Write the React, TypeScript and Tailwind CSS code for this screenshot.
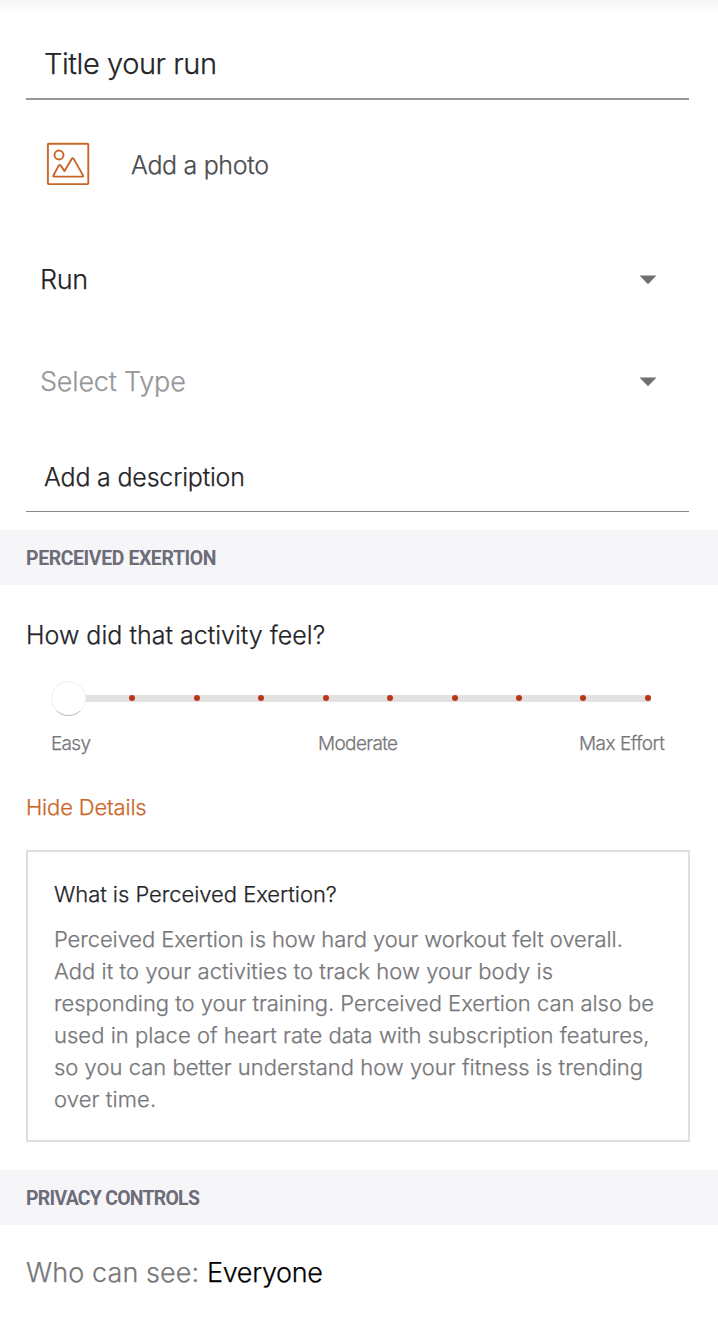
import React from "react";

const ticks = [1, 2, 3, 4, 5, 6, 7, 8, 9];

const explanation = [
  { text: "Perceived Exertion is how hard your workout felt overall.", style: "tracking-[-0.09px]" },
  { text: "Add it to your activities to track how your body is", style: "tracking-[0.05px]" },
  { text: "responding to your training. Perceived Exertion can also be", style: "tracking-[-0.04px]" },
  { text: "used in place of heart rate data with subscription features,", style: "tracking-[0.03px]" },
  { text: "so you can better understand how your fitness is trending", style: "tracking-[0.01px]" },
  { text: "over time.", style: "tracking-[0.12px]" },
];

function PhotoIcon() {
  return (
    <svg width="44" height="44" viewBox="0 0 44 44" fill="none" stroke="#cb6629" strokeWidth="1.9" strokeLinejoin="round">
      <rect x="1.9" y="1.7" width="40.4" height="40.4" rx="0.8" />
      <circle cx="13" cy="13" r="4.5" />
      <path d="M8 34.6 Q6.8 34.6 7.4 33.5 L12.7 23.6 Q13.7 22.1 14.8 23.6 L18.5 29.1 L25.7 16.9 Q26.7 15.4 27.7 16.9 L37 33.4 Q37.5 34.6 36.4 34.6 Z" />
    </svg>
  );
}

function Caret() {
  return (
    <svg width="18" height="10" viewBox="0 0 18 10" fill="#707070">
      <path d="M0.5 0.5H17.5L9 9.2Z" />
    </svg>
  );
}

function SectionHeader({ children }: { children: React.ReactNode }) {
  return (
    <h2 className="h-[55px] bg-[#f6f6f9] pl-[26px] pt-px font-['Roboto',sans-serif] text-[19.4px] leading-[56px] font-bold text-[#6d6d78] [-webkit-text-stroke:0px]">
      {children}
    </h2>
  );
}

export default function App() {
  return (
    <main className="flex h-[1318px] w-[718px] flex-col overflow-hidden whitespace-nowrap bg-white font-['Inter',sans-serif] font-light text-[#242428] [-webkit-text-stroke:0.25px]">
      <div className="h-3 shrink-0 bg-linear-to-b from-[#f5f5f5] to-white" />

      <div className="ml-[26px] mr-[29px] flex h-[88px] shrink-0 items-end border-b-2 border-[#98989a]">
        <div className="h-[68px] pl-[18px] text-[29px] leading-[68px] tracking-[-0.43px]">Title your run</div>
      </div>

      <div className="flex h-[130px] shrink-0 items-start pl-[46px] pt-[42px]">
        <PhotoIcon />
        <span className="ml-[41px] mt-[7px] text-[25px] leading-8 tracking-[-0.33px] text-[#4b4b4e]">Add a photo</span>
      </div>

      <div className="flex h-[99px] shrink-0 items-center justify-between pl-[40px] pr-[61px]">
        <span className="text-[27px] leading-8 tracking-[-0.4px]">Run</span>
        <Caret />
      </div>
      <div className="flex h-[105px] shrink-0 items-center justify-between pl-[40px] pr-[61px]">
        <span className="text-[27px] leading-8 tracking-[-0.2px] text-[#97979a]">Select Type</span>
        <Caret />
      </div>

      <div className="ml-[26px] mr-[29px] h-[78px] shrink-0 border-b border-[#88888a] pl-[18px] pt-[27px] text-[25px] leading-8 tracking-[-0.19px]">
        Add a description
      </div>

      <section className="mt-[18px]">
        <SectionHeader><span className="tracking-[-0.37px]">PERCEIVED EXERTION</span></SectionHeader>
        <p className="pl-[26px] pt-[34px] text-[25px] leading-8 tracking-[0.02px]">How did that activity feel?</p>

        <div className="mt-[27px] flex h-10 items-center pl-[51px]">
          <div className="size-[35px] shrink-0 rounded-full border border-[#f0f0f0] border-b-[#bcbcbc] bg-white" />
          <div className="flex h-[7px] w-[565px] items-center justify-between bg-[#e2e2e2] pl-[43.4px]">
            {ticks.map((tick) => (
              <span key={tick} className="size-1.5 shrink-0 rounded-full bg-[#b5371b]" />
            ))}
          </div>
        </div>

        <div className="mt-[10px] flex h-8 pl-[51px] text-[19px] leading-8 text-[#77777a]">
          <span className="w-[267px] tracking-[-0.7px]">Easy</span>
          <span className="w-[261px] tracking-[-0.64px]">Moderate</span>
          <span className="tracking-[-0.5px]">Max Effort</span>
        </div>

        <p className="mt-[31px] pl-[26px] text-[22px] leading-8 tracking-[-0.17px] text-[#cb6629]">Hide Details</p>

        <div className="ml-[26px] mr-7 mt-[27px] h-[292px] border-2 border-[#dfdfdf] pl-[26px] pt-[26px] text-[22px] leading-8">
          <h3 className="font-light tracking-[-0.04px]">What is Perceived Exertion?</h3>
          <div className="mt-[13px] text-[#77777a]">
            {explanation.map((line) => (
              <p key={line.text} className={line.style}>{line.text}</p>
            ))}
          </div>
        </div>
      </section>

      <section className="mt-7">
        <SectionHeader><span className="tracking-[-0.72px]">PRIVACY CONTROLS</span></SectionHeader>
        <p className="flex pl-[26px] pt-8 text-[27px] leading-8">
          <span className="w-[181px] tracking-[0.1px] text-[#77777a]">Who can see:</span>
          <span className="tracking-[-0.35px] text-black">Everyone</span>
        </p>
      </section>
    </main>
  );
}
